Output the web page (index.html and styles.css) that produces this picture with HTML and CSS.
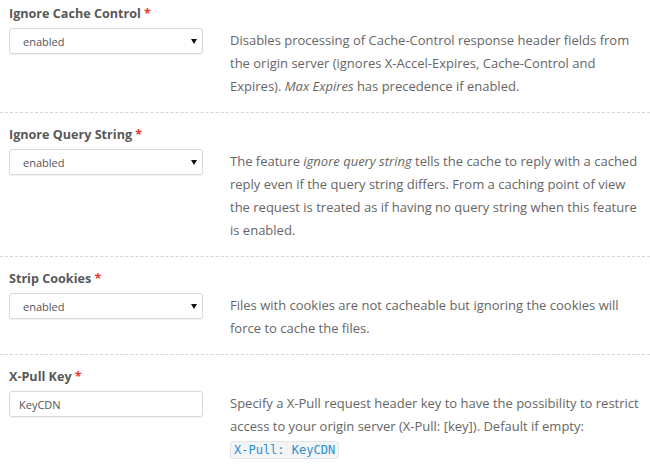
FILE: index.html
```html
<!DOCTYPE html>
<html lang="en">
<head>
    <meta charset="UTF-8">
    <title>Zone Settings</title>
    <link rel="stylesheet" href="styles.css">
</head>
<body>
    <div class="settings">
        <div class="setting first">
            <label class="setting-label">Ignore Cache Control <span class="req">*</span></label>
            <div class="select-wrap">
                <select class="field">
                    <option>enabled</option>
                    <option>disabled</option>
                </select>
            </div>
            <p class="help">Disables processing of Cache-Control response header fields from the origin server (ignores X-Accel-Expires, Cache-Control and Expires). <em>Max Expires</em> has precedence if enabled.</p>
        </div>

        <div class="setting">
            <label class="setting-label">Ignore Query String <span class="req">*</span></label>
            <div class="select-wrap">
                <select class="field">
                    <option>enabled</option>
                    <option>disabled</option>
                </select>
            </div>
            <p class="help">The feature <em>ignore query string</em> tells the cache to reply with a cached reply even if the query string differs. From a caching point of view the request is treated as if having no query string when this feature is enabled.</p>
        </div>

        <div class="setting">
            <label class="setting-label">Strip Cookies <span class="req">*</span></label>
            <div class="select-wrap">
                <select class="field">
                    <option>enabled</option>
                    <option>disabled</option>
                </select>
            </div>
            <p class="help">Files with cookies are not cacheable but ignoring the cookies will force to cache the files.</p>
        </div>

        <div class="setting last">
            <label class="setting-label">X-Pull Key <span class="req">*</span></label>
            <input type="text" class="field text" value="KeyCDN">
            <p class="help">Specify a X-Pull request header key to have the possibility to restrict access to your origin server (X-Pull: [key]). Default if empty: <code>X-Pull: KeyCDN</code></p>
        </div>
    </div>
</body>
</html>
```

FILE: styles.css
```css
body {
    margin: 0;
    background-color: white;
    font-family: "Open Sans", Arial, sans-serif;
    font-size: 13px;
}

.settings {
    width: 650px;
}

.setting {
    display: grid;
    grid-template-columns: 194px 1fr;
    grid-template-rows: auto auto;
    column-gap: 27px;
    padding: 12px 2px 14px 9px;
    border-bottom: 1px dashed #d6d6d6;
}

.setting.first {
    padding-top: 4px;
}

.setting.last {
    border-bottom: none;
}

.setting-label {
    grid-column: 1 / 3;
    font-weight: bold;
    font-size: 12.6px;
    color: #585858;
    line-height: 20px;
    margin-bottom: 4px;
}

.req {
    color: #e8372c;
}

.select-wrap {
    position: relative;
    align-self: start;
}

.select-wrap::after {
    content: "";
    position: absolute;
    right: 6px;
    top: 11px;
    border-left: 3px solid transparent;
    border-right: 3px solid transparent;
    border-top: 5px solid #111;
    pointer-events: none;
}

.field {
    display: block;
    width: 194px;
    height: 26px;
    box-sizing: border-box;
    border: 1px solid #d9d9d9;
    border-radius: 3px;
    box-shadow: 0 1px 1px rgba(0, 0, 0, 0.06);
    background-color: white;
    font-family: "Open Sans", Arial, sans-serif;
    font-size: 11px;
    color: #555;
    appearance: none;
    -webkit-appearance: none;
    padding: 0 20px 0 13px;
    margin: 0;
    outline: none;
}

.field.text {
    padding-left: 9px;
    align-self: start;
}

.help {
    margin: 1px 0 0;
    color: #666;
    line-height: 23px;
}

.help em {
    font-style: italic;
}

code {
    font-family: "DejaVu Sans Mono", monospace;
    font-size: 12px;
    color: #2a8fd0;
    background-color: #f3f4f6;
    border: 1px solid #e3e5e8;
    border-radius: 3px;
    padding: 1px 3px;
    white-space: nowrap;
}
```
